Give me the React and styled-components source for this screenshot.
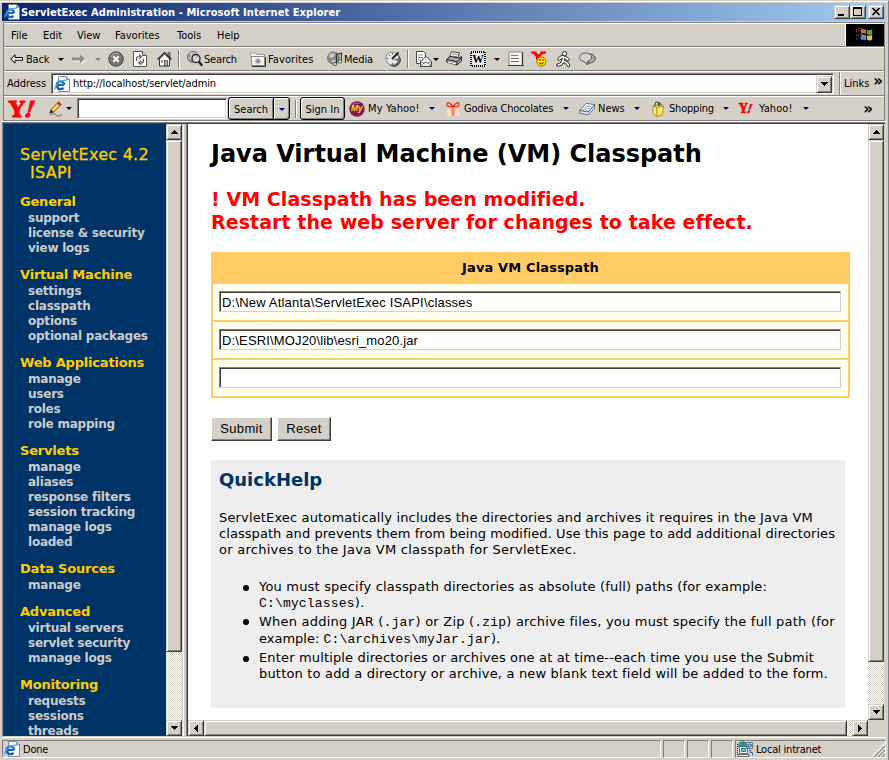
import React from 'react';
import styled, { createGlobalStyle, css } from 'styled-components';

const UI = '"DejaVu Sans Condensed", "DejaVu Sans", sans-serif';
const WEB = '"DejaVu Sans", sans-serif';
const FACE = '#d4d0c8';
const SHADOW = '#808080';
const DARK = '#404040';

const GlobalStyle = createGlobalStyle`
  * { box-sizing: border-box; }
  body { margin: 0; background: ${FACE}; overflow: hidden; }
  input, button { border-radius: 0; margin: 0; }
`;

const raised = css`
  border: 1px solid;
  border-color: ${FACE} ${DARK} ${DARK} ${FACE};
  box-shadow: inset 1px 1px 0 #fff, inset -1px -1px 0 ${SHADOW};
  background: ${FACE};
`;

const Window = styled.div`
  width: 889px;
  height: 760px;
  background: ${FACE};
  border-right: 1px solid ${SHADOW};
  border-top: 1px solid ${FACE};
  box-shadow: inset 0 1px 0 #fff;
  padding: 2px 2px 0 2px;
  display: flex;
  flex-direction: column;
  font: 11px/14px ${UI};
  letter-spacing: -0.18px;
  color: #000;
  white-space: nowrap;
`;

/* ---------- title bar ---------- */
const TitleBar = styled.header`
  height: 18px;
  flex: none;
  display: flex;
  align-items: center;
  padding: 0 2px;
  background: linear-gradient(90deg, #0a246a, #a6caf0);
  color: #fff;
`;
const TitleText = styled.h1`
  margin: 0 auto 0 1px;
  padding-top: 1px;
  font: bold 11px/16px ${UI};
  letter-spacing: 0.075px;
`;
const CaptionButton = styled.button`
  ${raised}
  width: 16px;
  height: 14px;
  padding: 0;
  margin-left: ${(p) => p.$gap || 0}px;
  display: flex;
`;

/* ---------- bars ---------- */
const Bars = styled.div`
  margin: 1px 1px 0 1px;
  border: 1px solid ${SHADOW};
  border-bottom: 0;
  flex: none;
`;
const Bar = styled.div`
  height: ${(p) => p.$h}px;
  border-top: 1px solid #fff;
  border-bottom: 1px solid ${SHADOW};
  display: flex;
  align-items: center;
  padding-left: ${(p) => p.$pad || 0}px;
`;
const Slot = styled.span`
  width: ${(p) => p.$w}px;
  flex: none;
  display: flex;
  align-items: center;
  letter-spacing: ${(p) => (p.$ls === undefined ? 'inherit' : p.$ls + 'px')};
`;
const Label = styled.span`
  padding-top: 1px;
`;
const Spacer = styled.span`
  flex: 1;
`;
const FlagBox = styled.span`
  width: 39px;
  height: 22px;
  background: #000;
  border-left: 1px solid #fff;
  display: flex;
  align-items: center;
  justify-content: center;
`;
const Separator = styled.span`
  width: 2px;
  height: ${(p) => p.$h || 18}px;
  border-left: 1px solid ${SHADOW};
  border-right: 1px solid #fff;
`;
const Caret = styled.span`
  width: 0;
  height: 0;
  border: 3px solid transparent;
  border-top-color: ${(p) => p.$color || '#000'};
  border-bottom-width: 0;
`;
const Glyph = styled.svg`
  display: block;
  flex: none;
  width: ${(p) => p.$w || 16}px;
  height: ${(p) => p.$h || 16}px;
  overflow: visible;
`;

const AddressField = styled.div`
  width: 783px;
  height: 21px;
  display: flex;
  align-items: center;
  background: #fff;
  border: 1px solid;
  border-color: ${SHADOW} #fff #fff ${SHADOW};
  box-shadow: inset 1px 1px 0 ${DARK}, inset -1px -1px 0 ${FACE};
  padding: 1px 1px 0 2px;
`;
const AddressText = styled.span`
  flex: 1;
  margin-left: 3px;
  letter-spacing: -0.11px;
`;
const DropButton = styled.button`
  ${raised}
  width: 16px;
  height: 17px;
  padding: 0;
  display: flex;
  align-items: center;
  justify-content: center;
`;
const LinksLabel = styled.span`
  margin-left: 3px;
  letter-spacing: 0;
`;
const Chevrons = styled.span`
  font: bold 15px/14px ${WEB};
  letter-spacing: 0;
  padding-bottom: ${(p) => p.$lift || 0}px;
  margin: 0 ${(p) => p.$right}px 0 auto;
`;
const SearchInput = styled.input`
  width: 150px;
  height: 21px;
  border: 1px solid;
  border-color: ${SHADOW} #fff #fff ${SHADOW};
  box-shadow: inset 1px 1px 0 ${DARK}, inset -1px -1px 0 ${FACE};
  background: #fff;
  padding: 0 3px;
  outline: 0;
`;
const OutlinedButton = styled.button`
  width: ${(p) => p.$w}px;
  height: 23px;
  margin-left: ${(p) => p.$gap || 0}px;
  padding: 2px 0 0;
  border: 1px solid #000;
  border-radius: ${(p) => p.$radius || '3px'};
  background: ${FACE};
  box-shadow: inset 1px 1px 0 #fff, inset -1px -1px 0 ${SHADOW};
  font: inherit;
  letter-spacing: 0;
  color: #000;
  display: flex;
  align-items: center;
  justify-content: center;
`;
const YahooMark = styled.span`
  width: ${(p) => p.$w}px;
  flex: none;
  font: bold ${(p) => p.$size}px/20px "DejaVu Serif", serif;
  letter-spacing: 0;
  color: #f00;
  -webkit-text-stroke: ${(p) => p.$stroke}px #f00;
  i {
    display: inline-block;
    margin-left: ${(p) => p.$tuck}px;
    transform: skewX(-8deg);
  }
`;

/* ---------- frames ---------- */
const Frames = styled.main`
  margin-top: 1px;
  border: 1px solid;
  border-color: ${SHADOW} ${FACE} ${FACE} ${SHADOW};
  box-shadow: inset 1px 1px 0 ${DARK}, 0 -1px 0 #fff, 0 1px 0 #fff;
  padding: 1px 0 0 1px;
  height: 615px;
  flex: none;
  display: flex;
`;
const SideFrame = styled.nav`
  width: 162px;
  height: 612px;
  background: #003366;
  overflow: hidden;
  padding: 22px 0 0 16px;
  font: bold 12px/15px ${WEB};
  letter-spacing: -0.23px;
  color: #ccc;
`;
const Brand = styled.div`
  font: 16px/18px ${WEB};
  letter-spacing: 0.27px;
  color: #fc0;
  -webkit-text-stroke: 0.3px #fc0;
  height: 48px;
`;
const BrandSecond = styled.div`
  padding-left: 10px;
`;
const Group = styled.section`
  margin-bottom: 11px;
`;
const GroupTitle = styled.h2`
  margin: 0 0 1px;
  font: bold 13px/16px ${WEB};
  letter-spacing: -0.2px;
  color: #fc0;
`;
const NavItem = styled.a`
  display: block;
  padding-left: 8px;
`;
const Splitter = styled.div`
  width: 6px;
  background: ${FACE};
  border-right: 1px solid ${DARK};
  box-shadow: inset 1px 0 0 ${FACE}, inset 2px 0 0 #fff, inset -1px 0 0 ${SHADOW};
`;

/* ---------- scrollbars ---------- */
const Track = styled.div`
  display: flex;
  flex: none;
  flex-direction: ${(p) => (p.$horizontal ? 'row' : 'column')};
  width: ${(p) => (p.$horizontal ? 'auto' : '16px')};
  height: ${(p) => (p.$horizontal ? '16px' : 'auto')};
  background: repeating-conic-gradient(#fff 0 25%, ${FACE} 0 50%) 0 0 / 2px 2px;
`;
const ScrollButton = styled.button`
  ${raised}
  width: 16px;
  height: 16px;
  padding: 0;
  flex: none;
  display: flex;
  align-items: center;
  justify-content: center;
`;
const Thumb = styled.div`
  ${raised}
  ${(p) => (p.$horizontal ? 'width' : 'height')}: ${(p) => p.$size}px;
  ${(p) => (p.$horizontal ? 'margin-right' : 'margin-bottom')}: auto;
`;

/* ---------- main frame ---------- */
const ContentColumn = styled.div`
  width: 680px;
  display: flex;
  flex-direction: column;
`;
const Page = styled.article`
  height: 596px;
  background: #fff;
  padding: 15px 0 0 23px;
  font: 13px/16px ${WEB};
  letter-spacing: 0.15px;
`;
const PageTitle = styled.h1`
  margin: 0;
  font: bold 24px/30px ${WEB};
  letter-spacing: -0.02px;
`;
const Warning = styled.div`
  margin: 19px 0 18px;
  font: bold 19px/23px ${WEB};
  letter-spacing: 0.07px;
  color: #f00;
`;
const PathTable = styled.div`
  width: 639px;
  background: #ffcc66;
  padding: 0 2px 2px;
  display: grid;
  row-gap: 2px;
`;
const PathHeader = styled.div`
  height: 30px;
  font: bold 13px/32px ${WEB};
  letter-spacing: 0.13px;
  text-align: center;
`;
const PathCell = styled.div`
  height: 36px;
  background: #ffffee;
  padding: 7px 6px 0;
`;
const PathInput = styled.input`
  display: block;
  width: 622px;
  height: 21px;
  background: #fff;
  border: 1px solid;
  border-color: ${SHADOW} ${FACE} ${FACE} ${SHADOW};
  box-shadow: inset 1px 1px 0 ${DARK};
  padding: 1px 2px 0 2px;
  outline: 0;
  font: 13px/16px "Liberation Sans", Arial, sans-serif;
  letter-spacing: ${(p) => p.$ls || 0}px;
  color: #000;
`;
const Actions = styled.div`
  display: flex;
  gap: 5px;
  margin: 19px 0;
`;
const FormButton = styled.button`
  ${raised}
  border-color: #fff ${DARK} ${DARK} #fff;
  box-shadow: inset -1px -1px 0 ${SHADOW};
  width: ${(p) => p.$w}px;
  height: 24px;
  padding: 0;
  font: 13px/20px "Liberation Sans", Arial, sans-serif;
  letter-spacing: 0.3px;
  color: #000;
`;
const HelpPanel = styled.section`
  width: 634px;
  height: 248px;
  background: #eee;
  padding: 7px 8px;
`;
const HelpTitle = styled.h2`
  margin: 0 0 17px;
  font: bold 18px/26px ${WEB};
  letter-spacing: 0;
  color: #003366;
`;
const Line = styled.span`
  display: block;
  letter-spacing: ${(p) => (p.$ls === undefined ? 0.15 : p.$ls)}px;
  line-height: ${(p) => p.$lh || 16}px;
`;
const HelpList = styled.ul`
  list-style: none;
  margin: 21px 0 0;
  padding: 0;
`;
const HelpItem = styled.li`
  display: flex;
  margin-bottom: ${(p) => p.$gap || 0}px;
`;
const Bullet = styled.span`
  width: 6px;
  height: 6px;
  margin: 6px 10px 0 24px;
  border-radius: 50%;
  background: #000;
  flex: none;
`;
const Code = styled.code`
  font: 13px/14px "Liberation Mono", monospace;
  letter-spacing: 0.17px;
`;
const Corner = styled.div`
  width: 16px;
  height: 16px;
  background: ${FACE};
`;
const VScrollColumn = styled.div`
  display: flex;
  flex-direction: column;
`;
const FullTrack = styled(Track)`
  flex: 1;
`;

/* ---------- status bar ---------- */
const StatusBar = styled.footer`
  display: flex;
  gap: 2px;
  padding-top: 3px;
  height: 21px;
`;
const StatusPane = styled.div`
  width: ${(p) => p.$w}px;
  height: 18px;
  flex: none;
  border: 1px solid;
  border-color: ${SHADOW} #fff #fff ${SHADOW};
  display: flex;
  align-items: center;
  gap: 3px;
  padding-left: ${(p) => p.$pad || 0}px;
`;
const StatusText = styled.span`
  padding-top: 1px;
  letter-spacing: -0.2px;
`;
const GripWrap = styled.span`
  margin: 2px 0 0 auto;
`;

/* ---------- icons ---------- */
const PageE = () => (
  <Glyph viewBox="0 0 16 16">
    <path d="M4.500.5h8l3 3v12h-11z" fill="#f6faff" stroke="#6d7f9c" strokeWidth=".9" />
    <path d="M12.500.5v3h3" fill="#bcc8e0" stroke="#6d7f9c" strokeWidth=".8" />
    <path d="M2.500 9h7.300M10.300 8.800a3.900 3.900 0 1 0-.8 2.900" fill="none" stroke="#1560b4" strokeWidth="2.200" />
    <path d="M4 6.500q2-2 4.500-.7" fill="none" stroke="#55aef0" />
    <path d="M1.200 13.800C-.3 10.500 6.500 3.500 12.800 4.300" fill="none" stroke="#4aa3e6" strokeWidth="1.200" />
  </Glyph>
);
const Minimize = () => (
  <Glyph $w={14} $h={12} viewBox="0 0 14 12"><path d="M3 8h6v2H3z" /></Glyph>
);
const Maximize = () => (
  <Glyph $w={14} $h={12} viewBox="0 0 14 12"><path d="M2 1h9v9H2zM3 3v6h7V3z" fillRule="evenodd" /></Glyph>
);
const Close = () => (
  <Glyph $w={14} $h={12} viewBox="0 0 14 12"><path d="M3.500 2l7 7M10.500 2l-7 7" stroke="#000" strokeWidth="1.700" /></Glyph>
);
const WinFlag = () => (
  <Glyph $w={18} $h={16} viewBox="0 0 18 16">
    <g strokeDasharray="1 1" strokeWidth="1.500" fill="none">
      <path d="M0 3q4-3 8 0M0 5q4-3 8 0" stroke="#a34848" />
      <path d="M0 9q4-3 8 0M0 12q4-3 8 0" stroke="#47689c" />
    </g>
    <path d="M5 3q2-2 5 0v4q-3-2-5 0z" fill="#d4693d" />
    <path d="M11 3q3 1 5-1v5q-2 2-5 0z" fill="#6f9b42" />
    <path d="M5 8.500q2-2 5 0v5q-3-2-5 0z" fill="#638dc2" />
    <path d="M11 8.500q3 1 5-1v5q-2 2-5 0z" fill="#e2ca52" />
    <path d="M10.500 2v12M16.500 1v12" stroke="#111" />
  </Glyph>
);
const ArrowLeft = () => (
  <Glyph $w={13} $h={10} viewBox="0 0 13 10">
    <path d="M.7 5 5 .8v2.700h7.500v3H5v2.700z" fill="#eee" stroke="#000" />
    <path d="M5 6h7" stroke="#888" />
  </Glyph>
);
const ArrowRight = () => (
  <Glyph $w={14} $h={10} viewBox="0 0 14 10">
    <path d="M14 6 9 10.500V7.500H1V5z" fill="#fff" />
    <path d="M13 5 8 .5v3H0v3h8v3z" fill="#8b8b8b" />
  </Glyph>
);
const Stop = () => (
  <Glyph viewBox="0 0 16 16">
    <circle cx="8" cy="8" r="7.200" fill="#777" stroke="#3b3b3b" />
    <path d="M3 6A5.500 5.500 0 0 1 11 2.800" stroke="#bbb" fill="none" />
    <path d="m5.300 5.300 5.400 5.400M10.700 5.300l-5.400 5.400" stroke="#fff" strokeWidth="2" />
  </Glyph>
);
const Refresh = () => (
  <Glyph $w={14} viewBox="0 0 14 16">
    <path d="M.5.5h9l4 4v11H.5z" fill="#fff" stroke="#555" />
    <path d="M9.500.5v4h4" fill="#ccc" stroke="#555" />
    <path d="M3.500 10V7.500q0-2 3-2M6 3.500l2.500 2L6 7.700M10.500 7.500V10q0 2-3 2M8.300 9.800l-2.500 2 2.500 2" fill="none" stroke="#555" strokeWidth="1.200" />
  </Glyph>
);
const Home = () => (
  <Glyph $w={15} viewBox="0 0 15 16">
    <path d="M11 1.500v4l2 2v-6z" fill="#999" stroke="#333" strokeWidth=".7" />
    <path d="M2.500 8v7h10V8L7.500 3z" fill="#fff" stroke="#333" />
    <path d="M.5 8.500 7.500 1.500l7 7" fill="none" stroke="#222" strokeWidth="1.200" />
    <path d="M7.500 9.500h3V15h-3z" fill="#aaa" stroke="#444" strokeWidth=".8" />
    <path d="M4 9.500h2v2H4z" fill="#777" />
  </Glyph>
);
const SearchIcon = () => (
  <Glyph viewBox="0 0 16 16">
    <circle cx="6" cy="6" r="5.500" fill="#999" stroke="#666" />
    <path d="M2 3q4-3 8 0M1 7q5 2 9-3M5 1q-2 5 1 10" fill="none" stroke="#ddd" />
    <circle cx="9" cy="7.500" r="4" fill="#ddd" stroke="#222" strokeWidth="1.300" />
    <path d="m7 9 4-4" stroke="#999" />
    <path d="m11.800 10.600 3.400 4.200" stroke="#222" strokeWidth="2.400" />
  </Glyph>
);
const FavoritesIcon = () => (
  <Glyph viewBox="0 0 16 16">
    <path d="M.5 3.500V2H6l1 1.500h7.500v2H.5z" fill="#f4f4f4" stroke="#999" />
    <path d="M1.500 5.500h13v9h-13z" fill="#f4f4f4" stroke="#888" />
    <path d="M8 7v6.500M4.800 10.200h6.400M5.800 8l4.400 4.400M10.200 8l-4.400 4.400" stroke="#666" strokeWidth=".8" />
    <path d="M2 15.500h13.500V6" fill="none" stroke="#333" />
  </Glyph>
);
const MediaIcon = () => (
  <Glyph viewBox="0 0 16 16">
    <circle cx="6.500" cy="7" r="6" fill="#8a8a8a" stroke="#777" />
    <path d="M2 4q3-3 6-1-1 4-5 4zM5 9q3-1 4 1l-2 3q-2-1-2-4z" fill="#c8c8c8" />
    <path d="M9.500 13V3.500l5-1.500v3" fill="none" stroke="#333" strokeWidth="1.200" />
    <path d="M14.500 4v6" stroke="#333" />
    <ellipse cx="8" cy="13" rx="2" ry="1.600" fill="#ddd" stroke="#333" strokeWidth=".8" />
    <ellipse cx="13" cy="10.500" rx="2" ry="1.600" fill="#eee" stroke="#333" strokeWidth=".8" />
  </Glyph>
);
const HistoryIcon = () => (
  <Glyph viewBox="0 0 16 16">
    <circle cx="9" cy="9" r="6.300" fill="#555" stroke="#444" />
    <circle cx="7.300" cy="7.500" r="6.500" fill="#e6e6e6" stroke="#888" />
    <path d="M7.500 2v1.500M2 7.500h1.500M7.500 12v1.500M12 9.500h1.500M4 4l1 1" stroke="#555" />
    <path d="m7 8 6.500-6.500" stroke="#222" strokeWidth="2" />
    <path d="M7.500 8.500 15 7l-1 3z" fill="#777" />
  </Glyph>
);
const MailIcon = () => (
  <Glyph $w={17} viewBox="0 0 17 16">
    <path d="M1.500.5h7l2 2v10h-9z" fill="#fff" stroke="#444" />
    <path d="M3 4h5M3 6.500h5M3 9h3" stroke="#888" />
    <path d="M5.500 15.500v-5L11 5.500l5.500 5v5z" fill="#eee" stroke="#444" />
    <path d="m5.500 15.500 4-4h3l4 4M5.500 10.500l4 2M16.500 10.500l-4 2" fill="none" stroke="#666" strokeWidth=".8" />
  </Glyph>
);
const PrintIcon = () => (
  <Glyph viewBox="0 0 16 16">
    <path d="m5.500.8 8 1-2 5.500-8-1.500z" fill="#fff" stroke="#444" />
    <path d="m6.500 3 5 .7M5.800 5l5 .7" stroke="#888" />
    <path d="M.7 8.500 4 5.500l9 1.500 2.500-1.500v4.500l-4.500 4-10.300-3z" fill="#aaa" stroke="#222" />
    <path d="m.7 8.500 10.300 2.200 4.500-4M11 11v3" fill="none" stroke="#222" />
    <path d="m2 11 8 2" stroke="#fff" />
  </Glyph>
);
const WordIcon = () => (
  <Glyph viewBox="0 0 16 16">
    <path d="M0 0h16v16H0z" fill="#e4e4e4" />
    <path d="M1 1h14v14H1z" fill="none" stroke="#000" strokeWidth="2" strokeDasharray="1 1" />
    <path d="M3 3h10v10H3z" fill="#f2f2f2" />
    <text x="8" y="12" textAnchor="middle" fontFamily="Liberation Serif" fontWeight="bold" fontSize="11.500">W</text>
  </Glyph>
);
const NotesIcon = () => (
  <Glyph viewBox="0 0 16 16">
    <path d="M1 1h12.500v13H1z" fill="#f4f4f4" />
    <path d="M1 14V1h12.500" fill="none" stroke="#888" />
    <path d="M0 14.500h15.500M14.500 1v14" stroke="#333" strokeWidth="1.200" />
    <path d="M3 4.500h7M3 7.500h8M3 10.500h8" stroke="#777" />
  </Glyph>
);
const SmileyIcon = () => (
  <Glyph viewBox="0 0 16 16">
    <path d="M0 .5h5.500v1.500l2 1.500 2-1.500V.5H15v2l-3 .5-3.500 3V9H5V6L2 2.500H0z" fill="#f00" />
    <circle cx="10.300" cy="10.500" r="4.600" fill="#ffe600" stroke="#a56d00" />
    <path d="M9 8v2M12 8v2M7.800 11.500q2.500 2.800 5 0" fill="none" stroke="#a00000" />
  </Glyph>
);
const RunnerIcon = () => (
  <Glyph $w={15} viewBox="0 0 15 16">
    <g fill="none" strokeLinecap="round" strokeLinejoin="round">
      <path d="m3 8 3-2.500 4 1.500 2 1.500M7.500 6.500 7 10l4 2 1.500 2.500M7 10l-2 3-3 1" stroke="#222" strokeWidth="3.400" />
      <path d="m3 8 3-2.500 4 1.500 2 1.500M7.500 6.500 7 10l4 2 1.500 2.500M7 10l-2 3-3 1" stroke="#f4f4f4" strokeWidth="1.700" />
    </g>
    <circle cx="8.500" cy="2.700" r="2.200" fill="#f4f4f4" stroke="#222" />
  </Glyph>
);
const TalkIcon = () => (
  <Glyph $w={17} viewBox="0 0 17 16">
    <ellipse cx="10" cy="7.500" rx="6.300" ry="4.600" fill="#aaa" stroke="#444" />
    <path d="M7.500 2C-1.500 1.500-1 10 5 10.300L8.500 14l-.3-3.700C14 9.500 14 2.500 7.500 2z" fill="#ddd" stroke="#555" />
    <path d="M3 4h7M2.500 6h8M3 8h6" stroke="#aaa" strokeDasharray="1 1" />
  </Glyph>
);
const PencilIcon = () => (
  <Glyph viewBox="0 0 16 16">
    <path d="m2 12 1.300-3.800L10.500 1l2.700 2.400L6 10.800z" fill="#ffd84a" stroke="#6b3200" strokeWidth=".9" />
    <path d="m9 2.500 2.700 2.700 1.700-1.700L10.700.9z" fill="#d92a1c" />
    <path d="m1.500 12.500 1.500-4 2.500 2.500z" fill="#222" />
    <path d="M2 14q5-2.500 6 0t6-.5" fill="none" stroke="#9a6b20" />
  </Glyph>
);
const MyIcon = () => (
  <Glyph viewBox="0 0 16 16">
    <circle cx="8" cy="8" r="7.700" fill="#7b1b52" />
    <path d="M2.500 5q3-4 8-3" stroke="#bd6d9c" fill="none" />
    <text x="7.800" y="10.300" textAnchor="middle" fontFamily="Liberation Sans" fontWeight="bold" fontStyle="italic" fontSize="8.500" fill="#ffd21a">My</text>
  </Glyph>
);
const GiftIcon = () => (
  <Glyph $w={14} viewBox="0 0 14 16">
    <path d="M1.500 8h11v7h-11z" fill="#ffe3c8" />
    <path d="M.5 5.500h13v3H.5z" fill="#ffc9a6" />
    <path d="M5.500 6h3v9h-3z" fill="#ff7f63" />
    <path d="M7 5.500Q2-.5 1 3t6 2.500Q12-.5 13 3T7 5.500" fill="none" stroke="#e8321d" strokeWidth="1.300" />
  </Glyph>
);
const NewsIcon = () => (
  <Glyph viewBox="0 0 16 16">
    <path d="M.7 9.500 7 2.500l8.500 1L9.500 11z" fill="#fff" stroke="#56617f" strokeWidth=".9" />
    <path d="M.7 9.500v2.500l8.500 2 6.300-7V3.500L9.500 11z" fill="#dfe6f5" stroke="#56617f" strokeWidth=".9" />
    <path d="m6.500 5 6 .7M5 6.700l6 .8M3.500 8.500l5.500.8" stroke="#7790c4" strokeWidth=".8" />
  </Glyph>
);
const BagIcon = () => (
  <Glyph $w={12} viewBox="0 0 12 16">
    <path d="m1 5 7-1 3.500 1-1 9L5 15.500 1 13z" fill="#ffe14a" stroke="#a08518" strokeWidth=".8" />
    <path d="m1 5 3.500 1.500.5 9M4.500 6.500 11.500 5" fill="none" stroke="#a08518" strokeWidth=".8" />
    <path d="M2.500 7v5M7 8v5M9 7.500v5" stroke="#fff8a0" />
    <path d="M3 5q0-4.500 2.500-4T7 5M6 4q1-4 3.500 0" fill="none" stroke="#4c4c4c" strokeWidth="1.100" />
  </Glyph>
);
const IntranetIcon = () => (
  <Glyph viewBox="0 0 16 16">
    <circle cx="5.500" cy="4.500" r="4.300" fill="#2878d0" />
    <path d="M2 3q2-3 5-2.500L5.500 4 3 5zM7 4l3-1-1.500 4z" fill="#35ad35" />
    <path d="M9.500 1.500h6v6h-6zM2.500 5.500h8v7h-8z" fill="#f2f2f2" stroke="#555" strokeWidth=".8" />
    <path d="M11 3h3.200v3H11zM4.500 7.500h4v3h-4z" fill="#49d3f3" stroke="#177cae" />
    <path d="M1 13.500h11v2H1z" fill="#eee" stroke="#444" strokeWidth=".8" />
    <path d="M12 9.500h2l-1 2h2.500v3" fill="none" stroke="#2879c2" />
    <path d="M.5 3v12" stroke="#333" strokeDasharray="1 1" />
  </Glyph>
);
const Grip = () => (
  <Glyph $w={13} $h={13} viewBox="0 0 13 13">
    <path d="M0 13 13 0M4 13l9-9M8 13l5-5" stroke="#fff" strokeWidth="1.200" />
    <path d="M1.500 13 13 1.500M2.500 13 13 2.500M5.500 13 13 5.500M6.500 13 13 6.500M9.500 13 13 9.500M10.500 13l2.500-2.500" stroke="#808080" />
  </Glyph>
);
const arrows = {
  up: [7, 4, 'M3 0h1v1h1v1h1v1h1v1H0V3h1V2h1V1h1z'],
  down: [7, 4, 'M0 0h7v1H6v1H5v1H4v1H3V3H2V2H1V1H0z'],
  left: [4, 7, 'M3 0h1v7H3V6H2V5H1V4H0V3h1V2h1V1h1z'],
  right: [4, 7, 'M0 0h1v1h1v1h1v1h1v1H3v1H2v1H1v1H0z'],
};
const Arrow = ({ dir }) => {
  const [w, h, d] = arrows[dir];
  return <Glyph $w={w} $h={h} viewBox={`0 0 ${w} ${h}`}><path d={d} /></Glyph>;
};

/* ---------- data ---------- */
const menus = [['File', 32], ['Edit', 34], ['View', 38], ['Favorites', 62], ['Tools', 40], ['Help', 40]];

const tools = [
  [16, <ArrowLeft />], [32, 'Back'], [14, <Caret />], [23, <ArrowRight />], [13, <Caret $color="#808080" />],
  [25, <Stop />], [24, <Refresh />], [21, <Home />], [9, <Separator />], [17, <SearchIcon />], [46, 'Search'],
  [18, <FavoritesIcon />], [59, 'Favorites', 0.1], [17, <MediaIcon />], [41, 'Media'], [22, <HistoryIcon />],
  [8, <Separator />], [18, <MailIcon />], [13, <Caret />], [24, <PrintIcon />], [24, <WordIcon />],
  [14, <Caret />], [23, <NotesIcon />], [25, <SmileyIcon />], [23, <RunnerIcon />], [17, <TalkIcon />],
];

const blue = '#00008b';
const bookmarks = [
  [19, <MyIcon />], [61, 'My Yahoo!', 0.12], [17, <Caret $color={blue} />],
  [18, <GiftIcon />], [99, 'Godiva Chocolates', -0.2], [16, <Caret $color={blue} />],
  [19, <NewsIcon />], [36, 'News', 0], [18, <Caret $color={blue} />],
  [17, <BagIcon />], [54, 'Shopping', -0.2], [16, <Caret $color={blue} />],
  [20, <YahooMark $w={16} $size={12} $stroke={0.6} $tuck={-1}>Y<i>!</i></YahooMark>],
  [44, 'Yahoo!', 0.1], [8, <Caret $color={blue} />],
];

const nav = [
  ['General', ['support', 'license & security', 'view logs']],
  ['Virtual Machine', ['settings', 'classpath', 'options', 'optional packages']],
  ['Web Applications', ['manage', 'users', 'roles', 'role mapping']],
  ['Servlets', ['manage', 'aliases', 'response filters', 'session tracking', 'manage logs', 'loaded']],
  ['Data Sources', ['manage']],
  ['Advanced', ['virtual servers', 'servlet security', 'manage logs']],
  ['Monitoring', ['requests', 'sessions', 'threads']],
];

const paths = [
  ['D:\\New Atlanta\\ServletExec ISAPI\\classes', 0.19],
  ['D:\\ESRI\\MOJ20\\lib\\esri_mo20.jar', 0.15],
  ['', 0],
];

const SlotRow = ({ items }) =>
  items.map(([w, part, ls], i) => (
    <Slot key={i} $w={w} $ls={ls}>{typeof part === 'string' ? <Label>{part}</Label> : part}</Slot>
  ));

export default function App() {
  return (
    <Window>
      <GlobalStyle />
      <TitleBar>
        <PageE />
        <TitleText>ServletExec Administration - Microsoft Internet Explorer</TitleText>
        <CaptionButton aria-label="Minimize"><Minimize /></CaptionButton>
        <CaptionButton aria-label="Maximize"><Maximize /></CaptionButton>
        <CaptionButton aria-label="Close" $gap={2}><Close /></CaptionButton>
      </TitleBar>

      <Bars>
        <Bar $h={24} $pad={7}>
          {menus.map(([label, w]) => <Slot key={label} $w={w} $ls={0}><Label>{label}</Label></Slot>)}
          <Spacer />
          <FlagBox><WinFlag /></FlagBox>
        </Bar>
        <Bar $h={24} $pad={6}>
          <SlotRow items={tools} />
        </Bar>
        <Bar $h={25} $pad={3}>
          <Slot $w={44} $ls={-0.05}>Address</Slot>
          <AddressField>
            <PageE />
            <AddressText>http://localhost/servlet/admin</AddressText>
            <DropButton aria-label="Addresses"><Arrow dir="down" /></DropButton>
          </AddressField>
          <Slot $w={5} />
          <Separator $h={23} />
          <LinksLabel>Links</LinksLabel>
          <Chevrons $right={1} $lift={6}>»</Chevrons>
        </Bar>
        <Bar $h={25} $pad={5}>
          <YahooMark $w={39} $size={22} $stroke={1} $tuck={0}>Y<i>!</i></YahooMark>
          <Slot $w={18}><PencilIcon /></Slot>
          <Slot $w={11}><Caret $color={blue} /></Slot>
          <SearchInput aria-label="Search the web" />
          <OutlinedButton $w={46} $gap={1} $radius="3px 0 0 3px">Search</OutlinedButton>
          <OutlinedButton $w={17} $gap={-1} $radius="0 3px 3px 0"><Caret $color={blue} /></OutlinedButton>
          <Slot $w={5} />
          <Separator />
          <OutlinedButton $w={45} $gap={3}>Sign In</OutlinedButton>
          <Slot $w={4} />
          <SlotRow items={bookmarks} />
          <Chevrons $right={11}>»</Chevrons>
        </Bar>
      </Bars>

      <Frames>
        <SideFrame>
          <Brand>
            ServletExec 4.2
            <BrandSecond>ISAPI</BrandSecond>
          </Brand>
          {nav.map(([title, items]) => (
            <Group key={title}>
              <GroupTitle>{title}</GroupTitle>
              {items.map((item) => <NavItem key={item}>{item}</NavItem>)}
            </Group>
          ))}
        </SideFrame>
        <Track>
          <ScrollButton aria-label="Up"><Arrow dir="up" /></ScrollButton>
          <Thumb $size={512} />
          <ScrollButton aria-label="Down"><Arrow dir="down" /></ScrollButton>
        </Track>
        <Splitter />
        <ContentColumn>
          <Page>
            <PageTitle>Java Virtual Machine (VM) Classpath</PageTitle>
            <Warning>
              ! VM Classpath has been modified.<br />
              Restart the web server for changes to take effect.
            </Warning>
            <PathTable>
              <PathHeader>Java VM Classpath</PathHeader>
              {paths.map(([value, ls], i) => (
                <PathCell key={i}><PathInput defaultValue={value} $ls={ls} spellCheck={false} /></PathCell>
              ))}
            </PathTable>
            <Actions>
              <FormButton $w={61}>Submit</FormButton>
              <FormButton $w={54}>Reset</FormButton>
            </Actions>
            <HelpPanel>
              <HelpTitle>QuickHelp</HelpTitle>
              <Line>ServletExec automatically includes the directories and archives it requires in the Java VM</Line>
              <Line $ls={0.063}>classpath and prevents them from being modified. Use this page to add additional directories</Line>
              <Line $ls={0.27}>or archives to the Java VM classpath for ServletExec.</Line>
              <HelpList>
                <HelpItem $gap={2}>
                  <Bullet />
                  <div>
                    <Line $ls={0.19}>You must specify classpath directories as absolute (full) paths (for example:</Line>
                    <Line><Code>C:\myclasses</Code>).</Line>
                  </div>
                </HelpItem>
                <HelpItem $gap={3}>
                  <Bullet />
                  <div>
                    <Line $lh={17} $ls={0.22}>When adding JAR (<Code>.jar</Code>) or Zip (<Code>.zip</Code>) archive files, you must specify the full path (for</Line>
                    <Line $lh={17} $ls={0}>example: <Code>C:\archives\myJar.jar</Code>).</Line>
                  </div>
                </HelpItem>
                <HelpItem>
                  <Bullet />
                  <div>
                    <Line>Enter multiple directories or archives one at at time--each time you use the Submit</Line>
                    <Line $ls={0.18}>button to add a directory or archive, a new blank text field will be added to the form.</Line>
                  </div>
                </HelpItem>
              </HelpList>
            </HelpPanel>
          </Page>
          <Track $horizontal>
            <ScrollButton aria-label="Left"><Arrow dir="left" /></ScrollButton>
            <Thumb $horizontal $size={643} />
            <ScrollButton aria-label="Right"><Arrow dir="right" /></ScrollButton>
          </Track>
        </ContentColumn>
        <VScrollColumn>
          <FullTrack>
            <ScrollButton aria-label="Up"><Arrow dir="up" /></ScrollButton>
            <Thumb $size={522} />
            <ScrollButton aria-label="Down"><Arrow dir="down" /></ScrollButton>
          </FullTrack>
          <Corner />
        </VScrollColumn>
      </Frames>

      <StatusBar>
        <StatusPane $w={659} $pad={1}><PageE /><StatusText>Done</StatusText></StatusPane>
        <StatusPane $w={22} />
        <StatusPane $w={22} />
        <StatusPane $w={22} />
        <StatusPane $w={151} $pad={1}>
          <IntranetIcon />
          <StatusText>Local intranet</StatusText>
          <GripWrap><Grip /></GripWrap>
        </StatusPane>
      </StatusBar>
    </Window>
  );
}
